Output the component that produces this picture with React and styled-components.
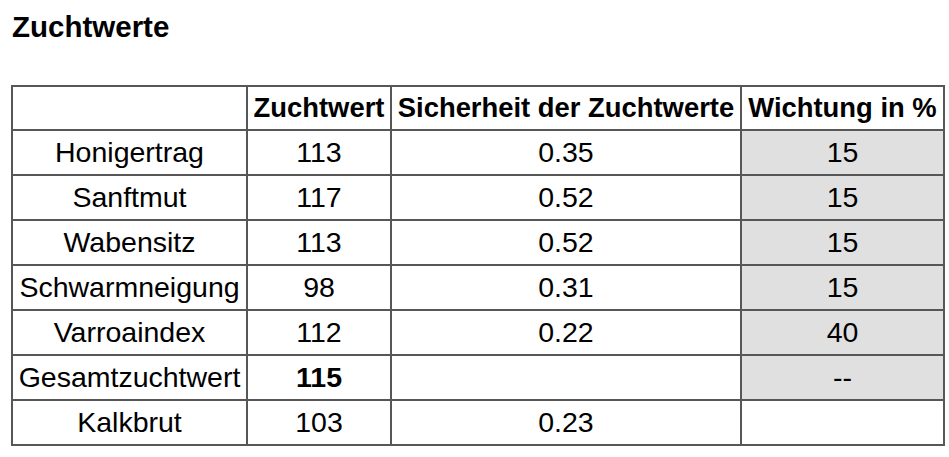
import React from 'react';
import styled, { createGlobalStyle } from 'styled-components';

const GlobalStyle = createGlobalStyle`
  body {
    margin: 0;
    background: #fff;
    font-family: "Liberation Sans", Arial, sans-serif;
    color: #000;
  }
`;

const Page = styled.div`
  padding: 9px 6px 0 11px;
`;

const Title = styled.h2`
  margin: 0 0 40px 1px;
  font-size: 29.5px;
  line-height: 36px;
  font-weight: bold;
`;

const Table = styled.table`
  border-collapse: collapse;
  width: 933px;
  table-layout: fixed;
  font-size: 28.5px;
`;

const Col = styled.col`
  width: ${p => p.w}px;
`;

const Cell = styled.td`
  border: 2px solid #575757;
  height: 43px;
  padding: 0 4px;
  text-align: center;
  white-space: nowrap;
  background: ${p => (p.$shade ? '#e0e0e0' : '#fff')};
  font-weight: ${p => (p.$bold ? 'bold' : 'normal')};
`;

const Head = styled(Cell).attrs({ as: 'th' })`
  height: 42px;
  font-size: 27.4px;
  font-weight: bold;
`;

const rows = [
  ['Honigertrag', '113', '0.35', '15'],
  ['Sanftmut', '117', '0.52', '15'],
  ['Wabensitz', '113', '0.52', '15'],
  ['Schwarmneigung', '98', '0.31', '15'],
  ['Varroaindex', '112', '0.22', '40'],
  ['Gesamtzuchtwert', '115', '', '--', true],
  ['Kalkbrut', '103', '0.23', null],
];

export default function App() {
  return (
    <Page>
      <GlobalStyle />
      <Title>Zuchtwerte</Title>
      <Table>
        <colgroup>
          <Col w={235} />
          <Col w={144} />
          <Col w={350} />
          <Col w={203} />
        </colgroup>
        <thead>
          <tr>
            <Head />
            <Head>Zuchtwert</Head>
            <Head>Sicherheit der Zuchtwerte</Head>
            <Head>Wichtung in %</Head>
          </tr>
        </thead>
        <tbody>
          {rows.map(([name, wert, sich, wicht, total]) => (
            <tr key={name}>
              <Cell>{name}</Cell>
              <Cell $bold={total}>{wert}</Cell>
              <Cell>{sich}</Cell>
              <Cell $shade={wicht !== null}>{wicht}</Cell>
            </tr>
          ))}
        </tbody>
      </Table>
    </Page>
  );
}
